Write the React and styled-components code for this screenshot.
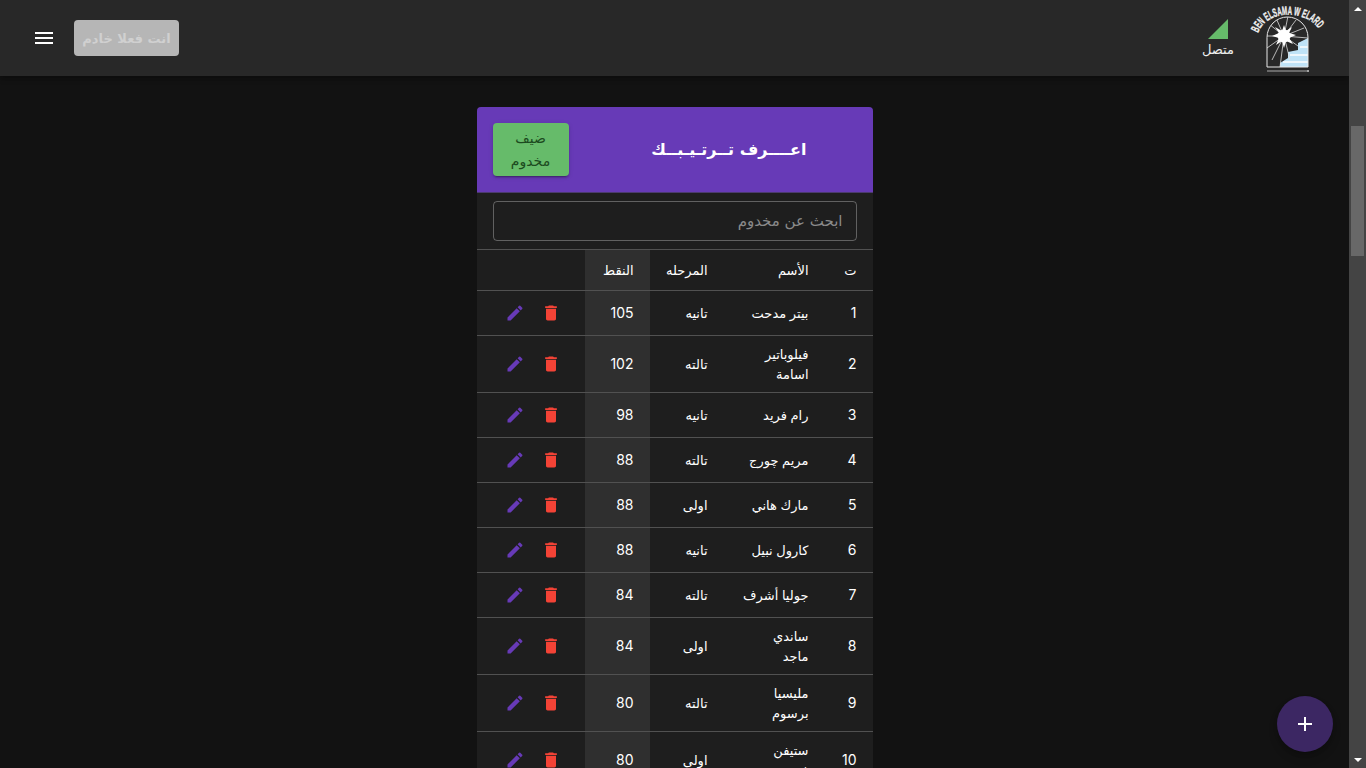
import React from "react";
import styled, { createGlobalStyle } from "styled-components";

const Global = createGlobalStyle`
  html, body { margin: 0; height: 100%; overflow: hidden; background: #121212; }
  body { font-family: "Inter", "Noto Sans", "DejaVu Sans", sans-serif; color: #fff; }
  #root { height: 100%; }
`;

const Shell = styled.div`display: flex; height: 768px;`;
const Main = styled.div`position: relative; flex: 1; min-width: 0; display: flex; flex-direction: column; overflow: hidden;`;
const Bar = styled.header`
  flex: none; height: 76px; box-sizing: border-box; background: #282828;
  display: flex; align-items: center; justify-content: space-between; padding: 0 19px 0 32px;
  box-shadow: 0 2px 4px -1px rgba(0,0,0,.2), 0 4px 5px rgba(0,0,0,.14);
`;
const Group = styled.div`display: flex; align-items: center; gap: ${p => p.$gap}px;`;
const Ghost = styled.button`
  width: 105px; height: 36px; padding: 0; border: 0; border-radius: 4px; background: #b6b6b6; color: #d0d0d0;
  font: 700 13px "DejaVu Sans", sans-serif; display: flex; align-items: center; justify-content: center;
`;
const Status = styled.div`display: flex; flex-direction: column; align-items: center; width: 34px; padding-bottom: 2px; font: 400 13px "DejaVu Sans", sans-serif; color: #eee;`;
const StatusLabel = styled.span`line-height: 14px; margin-top: 2px; white-space: nowrap;`;
const Icon = styled.svg`display: block; width: ${p => p.$s || 24}px; height: ${p => p.$s || 24}px; fill: ${p => p.$c || "#fff"}; flex: none;`;

const Content = styled.main`flex: 1; min-height: 0; display: flex; justify-content: center; padding-top: 31px;`;
const Card = styled.section`
  width: 396px; align-self: flex-start; flex: none; background: #1e1e1e; border-radius: 4px; overflow: hidden; direction: rtl;
`;
const CardHead = styled.div`
  height: 86px; box-sizing: border-box; background: #673ab7; padding: 16px; display: flex; align-items: center; justify-content: space-between;
  border-bottom: 1px solid #4b3a6e;
`;
const Title = styled.h2`margin: 0 50px 0 0; font: 700 16px/20px "DejaVu Sans", sans-serif; white-space: nowrap; color: #fff;`;
const Guest = styled.button`
  width: 76px; height: 53px; padding: 0; border: 0; border-radius: 4px; background: #66bb6a; color: #1c4a20;
  font: 400 14px/23px "DejaVu Sans", sans-serif; text-align: center;
  box-shadow: 0 3px 1px -2px rgba(0,0,0,.2), 0 2px 2px rgba(0,0,0,.14), 0 1px 5px rgba(0,0,0,.12);
`;
const SearchWrap = styled.div`padding: 8px 16px; height: 56px; box-sizing: border-box;`;
const Search = styled.input`
  width: 100%; height: 40px; box-sizing: border-box; background: transparent; border: 1px solid rgba(255,255,255,.3); border-radius: 4px;
  padding: 0 13px; color: #fff; font: 400 15px "DejaVu Sans", sans-serif; direction: rtl; outline: none;
  &::placeholder { color: #8a8a8a; opacity: 1; }
`;
const Table = styled.table`width: 100%; table-layout: fixed; border-collapse: collapse; border-top: 1px solid #515151;`;
const Col = styled.col`width: ${p => p.$w}px;`;
const Cell = styled.td`
  padding: 8px 16px; border-bottom: 1px solid #515151; font: 400 ${p => (p.$num ? 14 : 13)}px/20px "Inter", "DejaVu Sans", sans-serif; color: #fff; text-align: right;
  background: ${p => (p.$hi ? "#2f2f2f" : "transparent")}; white-space: nowrap;
`;
const HeadRow = styled.tr`height: 41px;`;
const Actions = styled.td`border-bottom: 1px solid #515151; padding: 12px 0;`;
const ActionRow = styled.div`display: flex; gap: 16px; padding-right: 24px;`;

const Fab = styled.button`
  position: absolute; right: 16px; bottom: 16px; width: 56px; height: 56px; border-radius: 50%; border: 0; padding: 0;
  background: #3c2763; display: flex; align-items: center; justify-content: center;
  box-shadow: 0 3px 5px -1px rgba(0,0,0,.2), 0 6px 10px rgba(0,0,0,.14);
`;

const Scroll = styled.aside`flex: none; width: 17px; background: #444; display: flex; flex-direction: column;`;
const Arrow = styled.div`height: 17px; flex: none; display: flex; align-items: center; justify-content: center;`;
const Tri = styled.span`
  width: 0; height: 0; border-left: 4px solid transparent; border-right: 4px solid transparent;
  ${p => (p.$down ? "border-top: 4px solid #fff;" : "border-bottom: 4px solid #fff;")}
`;
const Track = styled.div`flex: 1; padding: 109px 2px 0;`;
const Thumb = styled.div`height: 130px; background: #686868;`;

const P = {
  menu: "M3 18h18v-2H3v2zm0-5h18v-2H3v2zm0-7v2h18V6H3z",
  del: "M6 19c0 1.1.9 2 2 2h8c1.1 0 2-.9 2-2V7H6v12zM19 4h-3.5l-1-1h-5l-1 1H5v2h14V4z",
  edit: "M3 17.25V21h3.75L17.81 9.94l-3.75-3.75L3 17.25zM20.71 7.04c.39-.39.39-1.02 0-1.41l-2.34-2.34a.9959.9959 0 0 0-1.41 0l-1.83 1.83 3.75 3.75 1.83-1.83z",
  add: "M19 13h-6v6h-2v-6H5v-2h6V5h2v6h6v2z",
  sig: "M2 22h20V2z",
};
const Ic = ({ d, c, s }) => <Icon $c={c} $s={s} viewBox="0 0 24 24"><path d={d} /></Icon>;

const rows = [
  [1, ["بيتر مدحت"], "تانيه", 105],
  [2, ["فيلوباتير", "اسامة"], "تالته", 102],
  [3, ["رام فريد"], "تانيه", 98],
  [4, ["مريم چورج"], "تالته", 88],
  [5, ["مارك هاني"], "اولى", 88],
  [6, ["كارول نبيل"], "تانيه", 88],
  [7, ["جوليا أشرف"], "تالته", 84],
  [8, ["ساندي", "ماجد"], "اولى", 84],
  [9, ["مليسيا", "برسوم"], "تالته", 80],
  [10, ["ستيفن", "فوزي"], "اولى", 80],
];

const rays = [[4,-20],[12,-16],[20,-8],[24,2],[-8,-18],[-15,-12],[-17,0],[-17,12],[-12,24],[-4,31],[6,24],[14,10]];

const Logo = () => (
  <svg width="90" height="76" viewBox="0 0 90 76" style={{ display: "block" }}>
    <defs>
      <path id="logoArc" d="M18 33 C27 9, 67 9, 80 31" />
      <clipPath id="logoWin"><path d="M27 67 V37.5 A20.5 20.5 0 0 1 68 37.5 V67 Z" /></clipPath>
    </defs>
    <text fill="#f0f0f0" stroke="#f0f0f0" strokeWidth=".35" fontFamily="Liberation Sans" fontWeight="700" fontSize="12">
      <textPath href="#logoArc" textLength="72" lengthAdjust="spacingAndGlyphs">BEN ELSAMA W ELARD</textPath>
    </text>
    <g clipPath="url(#logoWin)">
      <path d="M68 38 L58 43 V50 L48 52 V58 L40 63 V67 H68 Z" fill="#bfe3f7" />
      <path d="M60 47 H68 M50 55 H68 M43 62 H68" stroke="#eef7fc" strokeWidth="2" />
      <g stroke="#ddd" strokeWidth=".8">
        {rays.map(([x, y], i) => <line key={i} x1="44" y1="36" x2={44 + x} y2={36 + y} />)}
      </g>
    </g>
    <path d="M44 25 L46 31 L52 27 L49 33 L56 35 L49 38 L53 44 L46 41 L44 48 L42 41 L36 45 L39 38 L32 36 L39 33 L35 27 L42 31 Z" fill="#fff" />
    <circle cx="44" cy="36" r="6.5" fill="#fff" />
    <path d="M27 67 V37.5 A20.5 20.5 0 0 1 68 37.5 V67 Z" fill="none" stroke="#e8e8e8" strokeWidth="1" />
    <path d="M27 71 H67" stroke="#ccc" strokeWidth=".8" />
    <circle cx="68" cy="71" r="1" fill="#ccc" />
  </svg>
);

export default function App() {
  return (
    <Shell>
      <Global />
      <Main>
        <Bar>
          <Group $gap={18}>
            <Ic d={P.menu} />
            <Ghost>انت فعلا خادم</Ghost>
          </Group>
          <Group $gap={5}>
            <Status>
              <Ic d={P.sig} c="#66bb6a" />
              <StatusLabel>متصل</StatusLabel>
            </Status>
            <Logo />
          </Group>
        </Bar>
        <Content>
          <Card>
            <CardHead>
              <Title>اعــــرف تــرتـيـبــك</Title>
              <Guest>ضيف<br />مخدوم</Guest>
            </CardHead>
            <SearchWrap><Search placeholder="ابحث عن مخدوم" /></SearchWrap>
            <Table>
              <colgroup>
                <Col $w={48} /><Col $w={101} /><Col $w={74} /><Col $w={65} /><Col $w={108} />
              </colgroup>
              <thead>
                <HeadRow>
                  <Cell as="th">ت</Cell>
                  <Cell as="th">الأسم</Cell>
                  <Cell as="th">المرحله</Cell>
                  <Cell as="th" $hi>النقط</Cell>
                  <Cell as="th" />
                </HeadRow>
              </thead>
              <tbody>
                {rows.map(([n, name, stage, pts]) => (
                  <tr key={n}>
                    <Cell $num>{n}</Cell>
                    <Cell>{name.map((l, i) => <React.Fragment key={i}>{i > 0 && <br />}{l}</React.Fragment>)}</Cell>
                    <Cell>{stage}</Cell>
                    <Cell $hi $num>{pts}</Cell>
                    <Actions>
                      <ActionRow>
                        <Ic d={P.del} c="#f44336" s={20} />
                        <Ic d={P.edit} c="#673ab7" s={20} />
                      </ActionRow>
                    </Actions>
                  </tr>
                ))}
              </tbody>
            </Table>
          </Card>
        </Content>
        <Fab aria-label="add"><Ic d={P.add} /></Fab>
      </Main>
      <Scroll>
        <Arrow><Tri /></Arrow>
        <Track><Thumb /></Track>
        <Arrow><Tri $down /></Arrow>
      </Scroll>
    </Shell>
  );
}
